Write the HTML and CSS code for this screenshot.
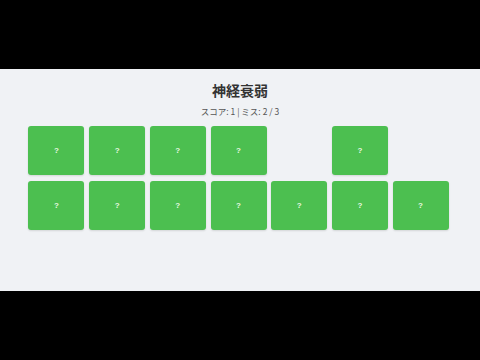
FILE: index.html
```html
<!DOCTYPE html>
<html lang="ja">
<head>
<meta charset="utf-8">
<link rel="stylesheet" href="styles.css">
</head>
<body>
<div class="frame">
  <main class="game">
    <h1 class="title">神経衰弱</h1>
    <p class="status">スコア: 1 | ミス: 2 / 3</p>
    <div class="board">
      <div class="card">?</div>
      <div class="card">?</div>
      <div class="card">?</div>
      <div class="card">?</div>
      <div class="card gone">?</div>
      <div class="card">?</div>
      <div class="card gone">?</div>
      <div class="card">?</div>
      <div class="card">?</div>
      <div class="card">?</div>
      <div class="card">?</div>
      <div class="card">?</div>
      <div class="card">?</div>
      <div class="card">?</div>
    </div>
  </main>
</div>
</body>
</html>
```
FILE: styles.css
```css
html, body {
  margin: 0;
  padding: 0;
  background: #000;
  width: 480px;
  height: 360px;
  overflow: hidden;
}
.frame {
  padding-top: 69px;
}
.game {
  height: 222px;
  background: #f0f2f5;
  box-sizing: border-box;
  padding-top: 11px;
  display: flex;
  flex-direction: column;
  align-items: center;
  font-family: "Noto Sans CJK JP", "Noto Sans", sans-serif;
}
.title {
  margin: 0;
  font-size: 14px;
  line-height: 20px;
  font-weight: 700;
  color: #333;
}
.status {
  margin: 5px 0 0;
  font-size: 8.5px;
  line-height: 12px;
  color: #555;
}
.board {
  margin-top: 9px;
  margin-left: -3px;
  display: grid;
  grid-template-columns: repeat(7, 56px);
  grid-auto-rows: 49px;
  column-gap: 4.7px;
  row-gap: 6px;
}
.card {
  background: #4cbf50;
  border-radius: 3px;
  box-shadow: 0 1px 2px rgba(0,0,0,0.12);
  display: flex;
  align-items: center;
  justify-content: center;
  color: #e8f8e0;
  font-family: "Liberation Sans", Arial, sans-serif;
  font-size: 8px;
  font-weight: 700;
}
.gone {
  visibility: hidden;
}
```
